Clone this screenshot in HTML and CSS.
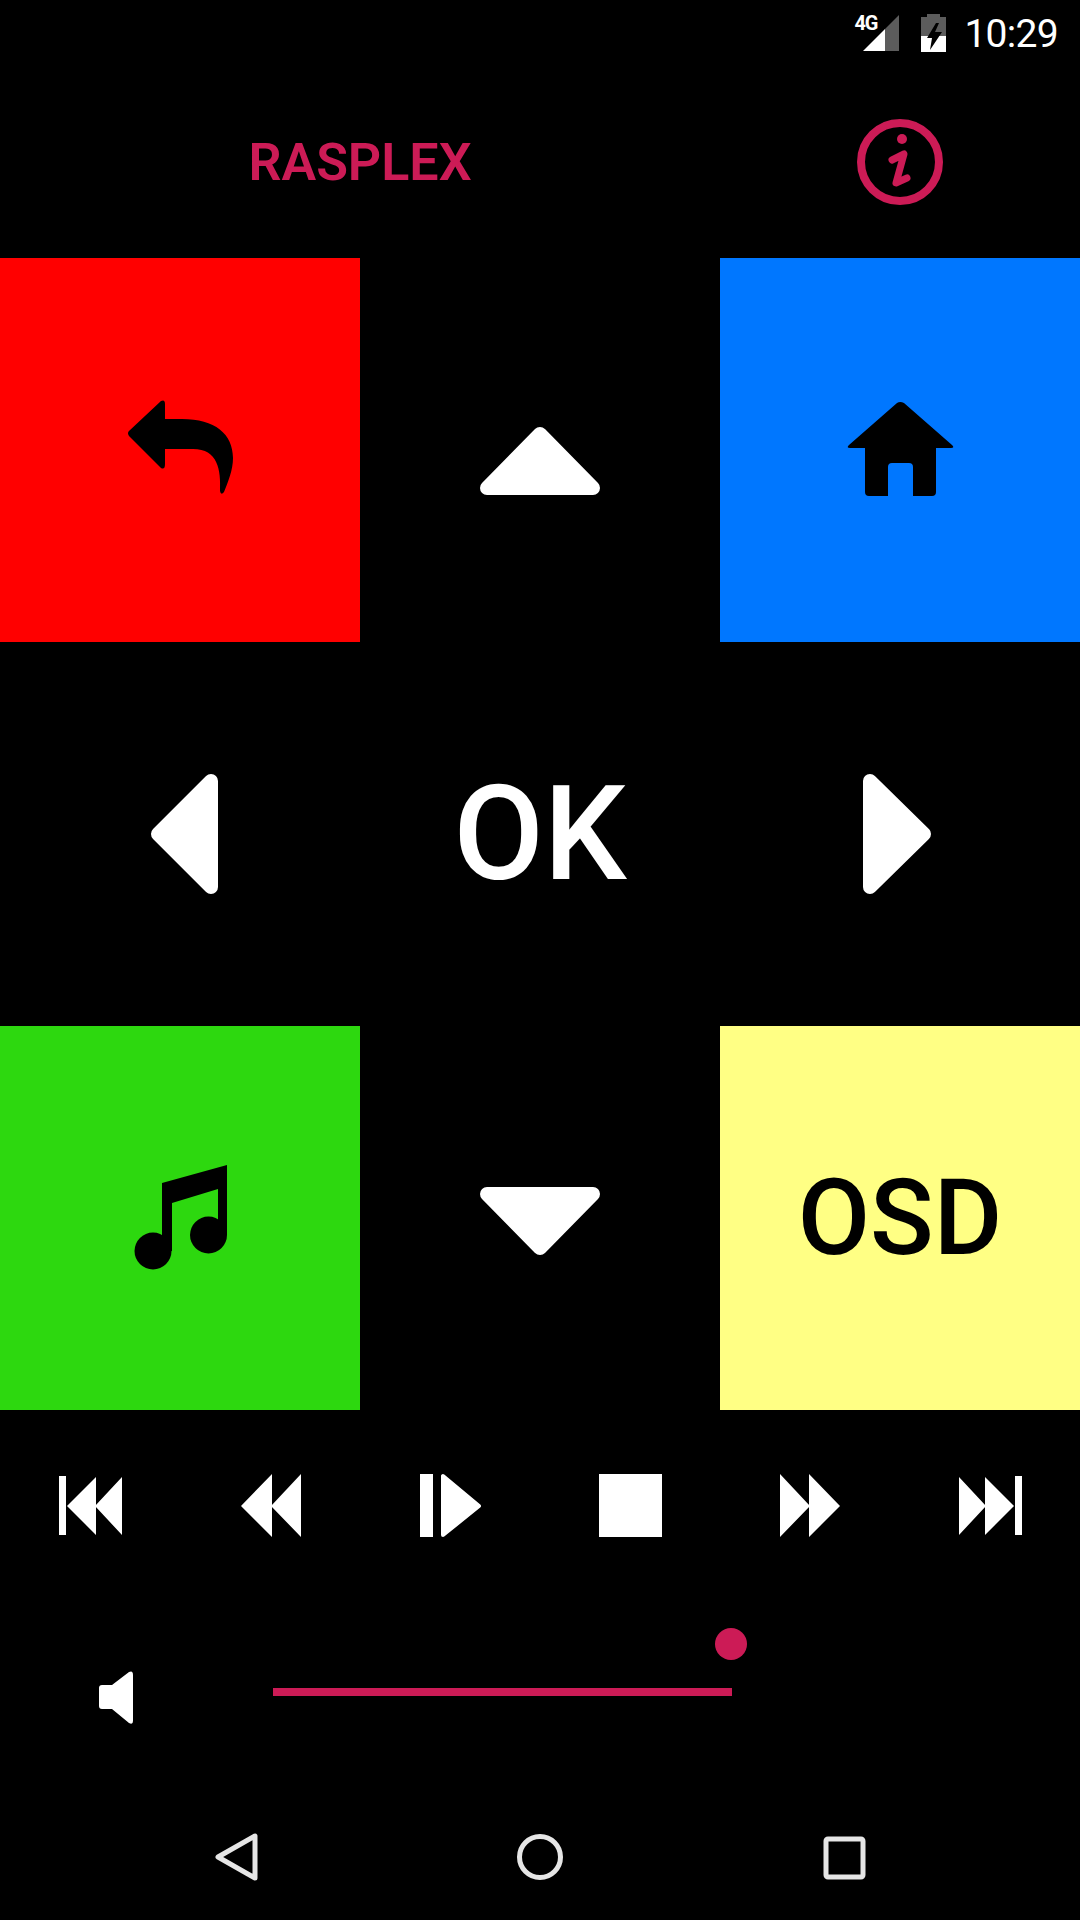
FILE: index.html
```html
<!DOCTYPE html>
<html lang="en">
<head>
    <meta charset="UTF-8">
    <meta name="viewport" content="width=device-width, initial-scale=1.0">
    <title>Rasplex remote</title>
    <link rel="stylesheet" href="styles.css">
</head>
<body>
    <div class="status-bar">
        <div class="signal">
            <span class="signal-label">4G</span>
            <svg width="46" height="38" viewBox="0 0 46 38">
                <polygon points="31,15 45,1 45,37 31,37" fill="#5c5c5c"/>
                <polygon points="9,37 31,15 31,37" fill="#fff"/>
            </svg>
        </div>
        <svg class="battery" width="25" height="38" viewBox="0 0 25 38">
            <path d="M6 0H19V3H25V22H0V3H6Z" fill="#5c5c5c"/>
            <rect y="22" width="25" height="16" fill="#fff"/>
            <polygon points="15,9 6,24 11,24 9,36 21,18 14,18 18,9" fill="#000"/>
        </svg>
        <span class="clock">10:29</span>
    </div>

    <header class="top-row">
        <h1 class="app-title">RASPLEX</h1>
        <div class="info-cell">
            <svg width="86" height="86" viewBox="0 0 86 86">
                <circle class="info-ring" cx="43" cy="43" r="39"/>
                <circle class="info-dot" cx="45" cy="20" r="5"/>
                <path class="info-stem" d="M35 41L47 35L39 64L50 59"/>
            </svg>
        </div>
    </header>

    <section class="pad">
        <div class="pad-key key-red">
            <svg width="120" height="120" viewBox="0 0 120 120">
                <path d="M41 11Q45 9 45 14V29H62C95 29 113 44 113 68C113 80 108 92 104 102Q101 106 100 101C101 80 98 59 73 59H45V74Q45 80 41 78L9 46Q7 43 9 41Z"/>
            </svg>
        </div>
        <div class="pad-key">
            <svg class="arrow" width="120" height="120" viewBox="0 0 120 120"><polygon points="60,44 113,98 7,98"/></svg>
        </div>
        <div class="pad-key key-blue">
            <svg width="120" height="120" viewBox="0 0 120 120">
                <path d="M57 13Q60 11 64 13L112 55Q115 58 111 58H96V102Q96 106 92 106H73V77Q73 73 69 73H52Q48 73 48 77V106H29Q25 106 25 102V58H10Q6 58 9 55Z"/>
            </svg>
        </div>

        <div class="pad-key">
            <svg class="arrow" width="120" height="120" viewBox="0 0 120 120"><polygon points="38,60 91,7 91,113"/></svg>
        </div>
        <div class="pad-key key-ok">OK</div>
        <div class="pad-key">
            <svg class="arrow" width="120" height="120" viewBox="0 0 120 120"><polygon points="30,7 30,113 84,60"/></svg>
        </div>

        <div class="pad-key key-green">
            <svg width="120" height="120" viewBox="0 0 120 120">
                <path d="M42 25L107 7V77H98V31L52 45V93H42Z"/>
                <circle cx="33" cy="93" r="18.5"/>
                <circle cx="88.500" cy="77" r="18.500"/>
            </svg>
        </div>
        <div class="pad-key">
            <svg class="arrow" width="120" height="120" viewBox="0 0 120 120"><polygon points="7,36 113,36 60,90"/></svg>
        </div>
        <div class="pad-key key-yellow">OSD</div>
    </section>

    <section class="media-row">
        <div class="media-key">
            <svg width="80" height="80" viewBox="0 0 80 80"><path d="M9 10H16V69H9ZM17 40L46 11V69ZM45 40L72 11V69Z"/></svg>
        </div>
        <div class="media-key">
            <svg width="80" height="80" viewBox="0 0 80 80"><path d="M11 40L42 8V71ZM41 40L71 8V71Z"/></svg>
        </div>
        <div class="media-key">
            <svg width="80" height="80" viewBox="0 0 80 80">
                <rect x="10" y="8" width="13" height="63"/>
                <polygon class="media-round" points="33,10 33,69 69,40"/>
            </svg>
        </div>
        <div class="media-key">
            <svg width="80" height="80" viewBox="0 0 80 80"><rect x="9" y="8" width="63" height="63"/></svg>
        </div>
        <div class="media-key">
            <svg width="80" height="80" viewBox="0 0 80 80"><path d="M10 8L40 40L10 71ZM39 8L70 40L39 71Z"/></svg>
        </div>
        <div class="media-key">
            <svg width="80" height="80" viewBox="0 0 80 80"><path d="M9 11L36 40L9 69ZM35 11L64 40L35 69ZM65 10H72V69H65Z"/></svg>
        </div>
    </section>

    <section class="volume-row">
        <svg class="speaker" width="70" height="70" viewBox="0 0 70 70">
            <path d="M48 15Q52 13 52 18V64Q52 68 48 66L31 52H21Q18 52 18 49V31Q18 28 21 28H31Z"/>
        </svg>
        <div class="slider">
            <div class="slider-thumb"></div>
        </div>
    </section>

    <nav class="nav-bar">
        <svg width="60" height="60" viewBox="0 0 60 60">
            <polygon class="nav-icon" points="12,30 49,9 49,51"/>
        </svg>
        <svg width="60" height="60" viewBox="0 0 60 60">
            <circle class="nav-icon" cx="30" cy="30" r="20.500"/>
        </svg>
        <svg width="60" height="60" viewBox="0 0 60 60">
            <rect class="nav-icon" x="12" y="12" width="37" height="38" rx="2"/>
        </svg>
    </nav>
</body>
</html>
```

FILE: styles.css
```css
:root {
    --accent: #cc1b56;
    --key-size: 360px;
}
body, body *, body *::before, body *::after {
    box-sizing: border-box;
    padding: 0;
    margin: 0;
}
body {
    background-color: #000;
    color: #fff;
    font-family: Roboto, "Liberation Sans", sans-serif;
    width: 1080px;
    height: 1920px;
    overflow: hidden;
}
svg {
    display: block;
}
.status-bar {
    display: flex;
    align-items: center;
    justify-content: flex-end;
    height: 66px;
    padding-right: 22px;
}
.signal {
    position: relative;
    margin-right: 21px;
}
.signal-label {
    position: absolute;
    left: 0;
    top: -1px;
    font-size: 20px;
    font-weight: 700;
    letter-spacing: -1px;
    line-height: 20px;
}
.battery {
    margin-right: 18px;
}
.clock {
    font-size: 39px;
    letter-spacing: -0.7px;
    line-height: 1;
    padding-top: 2px;
}
.top-row {
    display: grid;
    grid-template-columns: 720px 360px;
    align-items: center;
    height: 192px;
}
.app-title {
    color: var(--accent);
    font-size: 52px;
    font-weight: 600;
    text-align: center;
}
.info-cell {
    display: flex;
    justify-content: center;
}
.info-ring, .info-stem {
    fill: none;
    stroke: var(--accent);
    stroke-width: 8;
}
.info-stem {
    stroke-width: 7;
    stroke-linecap: round;
    stroke-linejoin: round;
}
.info-dot {
    fill: var(--accent);
}
.pad {
    display: grid;
    grid-template-columns: repeat(3, var(--key-size));
    grid-auto-rows: 384px;
}
.pad-key {
    display: flex;
    align-items: center;
    justify-content: center;
    font-weight: 500;
}
.key-red {
    background-color: #ff0000;
}
.key-blue {
    background-color: #0077ff;
}
.key-green {
    background-color: #2dd80f;
}
.key-yellow {
    background-color: #ffff84;
    color: #000;
    font-size: 105px;
}
.key-ok {
    font-size: 131px;
}
.arrow polygon {
    fill: #fff;
    stroke: #fff;
    stroke-width: 14;
    stroke-linejoin: round;
}
.media-row {
    display: grid;
    grid-template-columns: repeat(6, 180px);
    align-items: center;
    justify-items: center;
    height: 192px;
}
.media-key svg {
    fill: #fff;
}
.media-round {
    stroke: #fff;
    stroke-width: 4;
    stroke-linejoin: round;
}
.volume-row {
    display: flex;
    align-items: center;
    height: 174px;
    padding: 6px 0 0 81px;
}
.speaker {
    fill: #fff;
}
.slider {
    position: relative;
    background-color: var(--accent);
    margin-left: 122px;
    height: 8px;
    width: 459px;
}
.slider-thumb {
    position: absolute;
    left: 442px;
    top: -60px;
    background-color: var(--accent);
    border-radius: 50%;
    width: 32px;
    height: 32px;
}
.nav-bar {
    display: flex;
    justify-content: center;
    gap: 244px;
    height: 144px;
    padding-top: 51px;
}
.nav-icon {
    fill: none;
    stroke: #e6e6e6;
    stroke-width: 5;
    stroke-linejoin: round;
}
```
